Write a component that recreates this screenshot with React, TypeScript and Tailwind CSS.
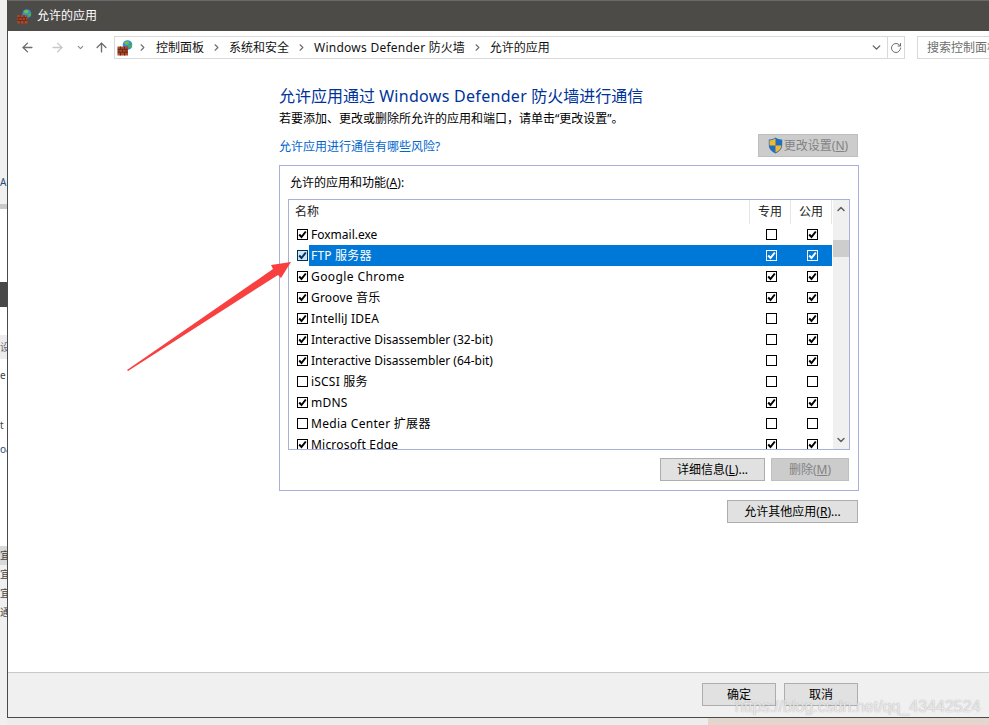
import { ArrowLeft, ArrowRight, ArrowUp, ChevronDown, ChevronRight, ChevronUp, RotateCw } from "lucide-react"

const font = { fontFamily: '"Noto Sans", "Noto Sans CJK SC", sans-serif' }

const apps = [
  { name: "Foxmail.exe", on: true, priv: false, pub: true },
  { name: "FTP 服务器", on: true, priv: true, pub: true, selected: true, track: "tracking-[0.2px]" },
  { name: "Google Chrome", on: true, priv: true, pub: true, track: "tracking-[0.4px]" },
  { name: "Groove 音乐", on: true, priv: true, pub: true, track: "tracking-[0.2px]" },
  { name: "IntelliJ IDEA", on: true, priv: false, pub: true, track: "tracking-[0.2px]" },
  { name: "Interactive Disassembler (32-bit)", on: true, priv: false, pub: true },
  { name: "Interactive Disassembler (64-bit)", on: true, priv: false, pub: true },
  { name: "iSCSI 服务", on: false, priv: false, pub: false, track: "tracking-[0.2px]" },
  { name: "mDNS", on: true, priv: true, pub: true, track: "tracking-[0.2px]" },
  { name: "Media Center 扩展器", on: false, priv: false, pub: false, track: "tracking-[0.3px]" },
  { name: "Microsoft Edge", on: true, priv: true, pub: true, track: "tracking-[0.2px]" },
]

function FirewallIcon({ size = 15 }: { size?: number }) {
  return (
    <svg width={size} height={size} viewBox="0 0 16 16" className="shrink-0">
      <circle cx="10.500" cy="5" r="4.800" fill="#2f8fd8" />
      <path d="M7 2.500c1.500-1.600 4-1.800 5.500-.6l-1 2.500-2.500.5-1-1z" fill="#6fbf4a" />
      <path d="M11 5.500l3.500-1.500c.8 1.500.5 3-.2 4l-2.800-.5z" fill="#4cae4c" />
      <rect x="0.500" y="6.500" width="10.500" height="9" fill="#ad4a2c" />
      <path d="M0.500 9.300h10.500M0.500 12.200h10.500M3.500 6.500v2.800M7.500 6.500v2.800M2 9.300v2.900M5.500 9.300v2.900M9 9.300v2.900M3.500 12.200v3.300M7.500 12.200v3.300" stroke="#5a2417" strokeWidth="0.800" fill="none" />
    </svg>
  )
}

function Shield() {
  return (
    <svg width="15" height="17" viewBox="0 0 15 17" className="shrink-0">
      <path d="M7.500 0.500C5.500 2 3 2.600 0.800 2.600V8c0 4 3 6.800 6.700 8.500 3.700-1.700 6.700-4.500 6.700-8.500V2.600C12 2.600 9.500 2 7.500 0.500z" fill="#1f6fc0" />
      <path d="M7.500 1.500v7H1.500V3.400c2.200-.1 4.200-.7 6-1.900zM7.500 8.500h6c-.2 3.300-2.900 5.700-6 7.100z" fill="#f5b72c" />
    </svg>
  )
}

function Check({ on, tone = "plain" }: { on: boolean; tone?: "plain" | "white" | "focus" }) {
  const box =
    tone === "white"
      ? "border-white bg-[#0078d7]"
      : tone === "focus"
        ? "border-[#00335c] bg-[#cfe4f5]"
        : "border-black bg-white"
  const mark = tone === "white" ? "#ffffff" : tone === "focus" ? "#00335c" : "#000000"
  return (
    <span className={`flex h-[11px] w-[11px] shrink-0 items-center justify-center border ${box}`}>
      {on && (
        <svg width="9" height="9" viewBox="0 0 9 9">
          <path d="M1.200 4.500L3.500 7l4.300-5.500" stroke={mark} strokeWidth="2" fill="none" />
        </svg>
      )}
    </span>
  )
}

function Btn({ children, disabled, className = "" }: { children: React.ReactNode; disabled?: boolean; className?: string }) {
  return (
    <div
      className={`flex h-[23px] items-center justify-center border text-[12px] ${
        disabled ? "border-[#bfbfbf] bg-[#cccccc] text-[#838383]" : "border-[#adadad] bg-[#e1e1e1] text-black"
      } ${className}`}
    >
      {children}
    </div>
  )
}

function Sep({ className = "mx-[7px]" }: { className?: string }) {
  return <ChevronRight size={11} strokeWidth={2.500} className={`shrink-0 text-[#6f6f6f] ${className}`} />
}

function LeftStrip() {
  return (
    <div className="flex h-full w-[7px] shrink-0 flex-col overflow-hidden bg-[#f0f0f0] text-[10px] leading-[12px] text-[#444]">
      <div className="h-[176px] shrink-0" />
      <div className="h-[12px] shrink-0 whitespace-nowrap text-[#1f4f7f]">Au</div>
      <div className="h-[16px] shrink-0" />
      <div className="h-[5px] shrink-0 bg-[#c9c9c9]" />
      <div className="h-[73px] shrink-0 bg-white" />
      <div className="h-[25px] shrink-0 bg-[#484848]" />
      <div className="h-[28px] shrink-0 bg-white" />
      <div className="h-[24px] shrink-0 whitespace-nowrap bg-[#ececec] pt-[6px] text-[#667]">设</div>
      <div className="h-[60px] shrink-0 whitespace-nowrap bg-white pt-[10px]">e</div>
      <div className="h-[24px] shrink-0 whitespace-nowrap bg-white">t</div>
      <div className="h-[103px] shrink-0 whitespace-nowrap bg-white text-[#1f4f7f]">oa</div>
      <div className="h-[19px] shrink-0 whitespace-nowrap bg-[#d9d9d9] pt-[3px]">宜</div>
      <div className="h-[19px] shrink-0 whitespace-nowrap pt-[3px]">宜</div>
      <div className="h-[19px] shrink-0 whitespace-nowrap pt-[3px]">宜</div>
      <div className="h-[19px] shrink-0 whitespace-nowrap pt-[3px]">通</div>
    </div>
  )
}

function AppList() {
  return (
    <div className="flex h-[251px] w-[562px] border border-[#a9aeda]">
      <div className="flex min-w-0 flex-1 flex-col overflow-hidden">
        <div className="flex h-[24px] shrink-0 pr-[1px] text-[12px] text-[#222]">
          <div className="flex-1 border-r border-[#e5e5e5] pl-[6px] leading-[23px]">名称</div>
          <div className="w-[41px] border-r border-[#e5e5e5] text-center leading-[23px]">专用</div>
          <div className="w-[41px] border-r border-[#e5e5e5] text-center leading-[23px]">公用</div>
        </div>
        {apps.map((a) => (
          <div key={a.name} className="flex h-[21px] shrink-0 items-center pr-[1px]">
            <div className="flex w-[20px] shrink-0 justify-end pr-[1px]">
              <Check on={a.on} tone={a.selected ? "focus" : "plain"} />
            </div>
            <div className={`flex h-full flex-1 items-center ${a.selected ? "bg-[#0078d7] text-white" : "text-black"}`}>
              <div className={`flex-1 pl-[2px] text-[12px] whitespace-nowrap ${a.track ?? ""}`}>{a.name}</div>
              <div className="flex w-[41px] justify-center">
                <Check on={a.priv} tone={a.selected ? "white" : "plain"} />
              </div>
              <div className="flex w-[40px] justify-center">
                <Check on={a.pub} tone={a.selected ? "white" : "plain"} />
              </div>
            </div>
          </div>
        ))}
      </div>
      <div className="flex w-[16px] shrink-0 flex-col items-center bg-[#f0f0f0] text-[#606060]">
        <ChevronUp size={12} strokeWidth={3} className="mt-[3px] shrink-0" />
        <div className="mt-[25px] h-[17px] w-full shrink-0 bg-[#cdcdcd]" />
        <div className="flex-1" />
        <ChevronDown size={12} strokeWidth={3} className="mb-[3px] shrink-0" />
      </div>
    </div>
  )
}

export default function App() {
  return (
    <div className="relative flex h-[725px] w-[989px] overflow-hidden bg-white" style={font}>
      <LeftStrip />
      <div className="flex h-full min-w-0 flex-1 flex-col">
        <div className="flex min-h-0 flex-1 flex-col border-b border-l border-[#4a4a4a]">
          {/* title bar */}
          <div className="flex h-[31px] shrink-0 items-center gap-[5px] border-t border-[#6a6a6a] bg-[#4d4b48] pl-[9px] text-[12px] text-white">
            <FirewallIcon />
            <span>允许的应用</span>
          </div>

          {/* address bar */}
          <div className="mt-[5px] flex h-[23px] shrink-0 items-center overflow-hidden">
            <ArrowLeft size={15} strokeWidth={2.200} className="ml-[12px] shrink-0 text-[#6e6e6e]" />
            <ArrowRight size={15} strokeWidth={2.200} className="ml-[15px] shrink-0 text-[#c8c8c8]" />
            <ChevronDown size={9} strokeWidth={3} className="ml-[11px] shrink-0 text-[#8a8a8a]" />
            <ArrowUp size={15} strokeWidth={2.200} className="ml-[9px] shrink-0 text-[#6e6e6e]" />
            <div className="ml-[5px] flex h-[23px] w-[791px] shrink-0 items-center border border-[#d9d9d9] pl-[2px] text-[12px] text-[#111]">
              <FirewallIcon size={16} />
              <Sep className="ml-[4px] mr-[8px]" />
              <span>控制面板</span>
              <Sep />
              <span>系统和安全</span>
              <Sep />
              <span>
                <span className="tracking-[0.25px]">Windows Defender </span>防火墙
              </span>
              <Sep />
              <span>允许的应用</span>
              <div className="flex-1" />
              <ChevronDown size={13} strokeWidth={2.500} className="mr-[4px] text-[#606060]" />
              <div className="flex h-full w-[17px] items-center justify-center border-l border-[#d9d9d9]">
                <RotateCw size={12} strokeWidth={2} className="text-[#6e6e6e]" />
              </div>
            </div>
            <div className="ml-[12px] flex h-[23px] flex-1 items-center overflow-hidden border-y border-l border-[#d9d9d9] pl-[9px] text-[12px] whitespace-nowrap text-[#6d6d6d]">
              搜索控制面板
            </div>
          </div>

          {/* main */}
          <div className="min-h-0 flex-1 pl-[271px]">
            <div className="w-[580px]">
              <h1 className="mt-[25px] h-[24px] text-[16px] leading-[24px] whitespace-nowrap text-[#003399]">
                允许应用通过 <span className="tracking-[0.3px]">Windows Defender</span> 防火墙进行通信
              </h1>
              <p className="mt-[2px] h-[17px] text-[12px] leading-[17px] whitespace-nowrap text-black">
                若要添加、更改或删除所允许的应用和端口，请单击“更改设置”。
              </p>
              <div className="flex h-[30px] items-end justify-between pr-[1px]">
                <span className="mb-[2px] text-[12px] leading-[17px] text-[#0066cc]">允许应用进行通信有哪些风险?</span>
                <Btn disabled className="w-[100px] gap-[1px]">
                  <Shield />
                  <span>
                    更改设置(<span className="underline">N</span>)
                  </span>
                </Btn>
              </div>
              <div className="mt-[8px] h-[326px] border border-[#a9aeda] pl-[8px]">
                <div className="h-[33px] pl-[2px] pt-[8px] text-[12px] leading-[17px] text-black">
                  允许的应用和功能(<span className="underline">A</span>):
                </div>
                <AppList />
                <div className="mt-[8px] flex w-[561px] justify-end gap-[6px]">
                  <Btn className="w-[105px]">
                    <span>
                      详细信息(<span className="underline">L</span>)...
                    </span>
                  </Btn>
                  <Btn disabled className="w-[78px]">
                    <span>
                      删除(<span className="underline">M</span>)
                    </span>
                  </Btn>
                </div>
              </div>
              <div className="mt-[9px] flex justify-end pr-[1px]">
                <Btn className="w-[131px]">
                  <span>
                    允许其他应用(<span className="underline">R</span>)...
                  </span>
                </Btn>
              </div>
            </div>
          </div>

          {/* footer */}
          <div className="flex h-[45px] shrink-0 items-start justify-start gap-[8px] border-t border-[#c9c9c9] bg-[#f0f0f0] pl-[694px] pt-[10px]">
            <Btn className="w-[74px]">确定</Btn>
            <Btn className="w-[74px]">取消</Btn>
          </div>
        </div>
        <div className="flex h-[7px] shrink-0">
          <div className="w-[701px] bg-[#ededed]" />
          <div className="flex-1 bg-[#e2d6cf]" />
        </div>
      </div>

      {/* red annotation arrow */}
      <svg className="absolute left-[120px] top-[255px]" width="180" height="120" viewBox="0 0 180 120">
        <path d="M7 115L153 14l-2-4 20-3-10 16-3-3L8 116z" fill="#f84040" />
      </svg>

      <div className="absolute left-[735px] top-[696px] font-['Liberation_Sans'] text-[16px] leading-[22px] whitespace-nowrap text-white/75 [text-shadow:0_0_1px_rgba(90,90,90,0.6)]">
        https://blog.csdn.net/qq_43442524
      </div>
    </div>
  )
}
